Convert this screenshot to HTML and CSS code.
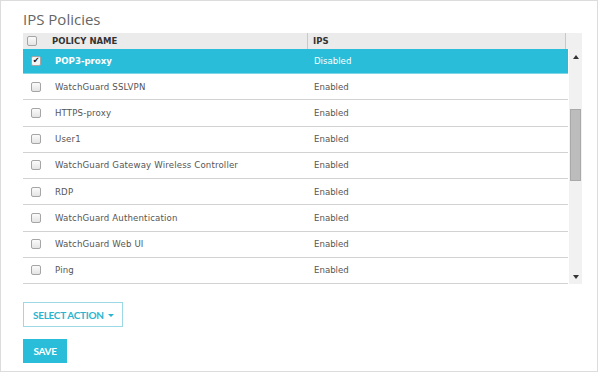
FILE: index.html
```html
<!DOCTYPE html>
<html lang="en">
<head>
  <meta charset="UTF-8">
  <title>IPS Policies</title>
  <link rel="stylesheet" href="styles.css">
</head>
<body>
  <div class="panel">
    <h1 class="title">IPS Policies</h1>

    <div class="grid">
      <div class="grid-head">
        <div class="col-check"><span class="box"></span></div>
        <div class="col-name">POLICY NAME</div>
        <div class="col-ips">IPS</div>
        <div class="corner"></div>
      </div>

      <div class="grid-body">
        <div class="rows">
          <div class="row selected">
            <div class="col-check"><span class="box checked">&#10004;</span></div>
            <div class="col-name">POP3-proxy</div>
            <div class="col-ips">Disabled</div>
          </div>
          <div class="row">
            <div class="col-check"><span class="box"></span></div>
            <div class="col-name">WatchGuard SSLVPN</div>
            <div class="col-ips">Enabled</div>
          </div>
          <div class="row">
            <div class="col-check"><span class="box"></span></div>
            <div class="col-name">HTTPS-proxy</div>
            <div class="col-ips">Enabled</div>
          </div>
          <div class="row">
            <div class="col-check"><span class="box"></span></div>
            <div class="col-name">User1</div>
            <div class="col-ips">Enabled</div>
          </div>
          <div class="row">
            <div class="col-check"><span class="box"></span></div>
            <div class="col-name">WatchGuard Gateway Wireless Controller</div>
            <div class="col-ips">Enabled</div>
          </div>
          <div class="row">
            <div class="col-check"><span class="box"></span></div>
            <div class="col-name">RDP</div>
            <div class="col-ips">Enabled</div>
          </div>
          <div class="row">
            <div class="col-check"><span class="box"></span></div>
            <div class="col-name">WatchGuard Authentication</div>
            <div class="col-ips">Enabled</div>
          </div>
          <div class="row">
            <div class="col-check"><span class="box"></span></div>
            <div class="col-name">WatchGuard Web UI</div>
            <div class="col-ips">Enabled</div>
          </div>
          <div class="row">
            <div class="col-check"><span class="box"></span></div>
            <div class="col-name">Ping</div>
            <div class="col-ips">Enabled</div>
          </div>
        </div>

        <!-- scrollbar -->
        <div class="scrollbar">
          <span class="arrow up"></span>
          <div class="track">
            <div class="thumb"></div>
          </div>
          <span class="arrow down"></span>
        </div>
      </div>
    </div>

    <button class="btn-outline">SELECT ACTION <span class="caret"></span></button>
    <button class="btn-save">SAVE</button>
  </div>
</body>
</html>
```

FILE: styles.css
```css
body {
  margin: 0;
  font-family: "DejaVu Sans", Verdana, sans-serif;
  background: #fff;
}
.panel {
  width: 598px;
  height: 372px;
  box-sizing: border-box;
  border: 1px solid #dcdcdc;
  padding: 0 0 0 22px;
}
.title {
  margin: 0;
  height: 32px;
  padding-top: 8px;
  box-sizing: border-box;
  font-family: "Open Sans", sans-serif;
  font-weight: 400;
  font-size: 15px;
  line-height: 20px;
  color: #666;
}
.grid {
  width: 559px;
}
.grid-head {
  display: flex;
  height: 16px;
  background: #ebebeb;
  font-size: 8.5px;
  font-weight: bold;
  color: #333;
  line-height: 16px;
}
.grid-head .col-check {
  width: 24px;
  padding-left: 4px;
  padding-top: 3px;
}
.grid-head .col-name {
  width: 260px;
  padding-left: 5px;
}
.grid-head .col-ips {
  width: 259px;
  padding-left: 5px;
  border-left: 1px solid #c8c8c8;
  border-right: 1px solid #c8c8c8;
}
.grid-head .corner {
  flex: 1;
  background: #f0f0f0;
}
.col-check, .col-name, .col-ips {
  box-sizing: border-box;
}
.grid-body {
  display: flex;
}
.rows {
  width: 545px;
}
.row {
  display: flex;
  height: 26.25px;
  box-sizing: border-box;
  border-bottom: 1px solid #d2d2d2;
  align-items: center;
  font-size: 8.6px;
  letter-spacing: 0.15px;
  color: #555;
}
.row .col-check {
  width: 24px;
  padding-left: 8px;
}
.row .col-name {
  width: 260px;
  padding-left: 8px;
}
.row .col-ips {
  width: 261px;
  padding-left: 7px;
  letter-spacing: 0;
}
.row.selected {
  height: 25px;
  background: #29bdd9;
  border-bottom: 1px solid #7fd5e6;
  color: #fff;
}
.row.selected .col-name {
  font-weight: bold;
  letter-spacing: 0;
}
.box {
  display: block;
  width: 10px;
  height: 10px;
  box-sizing: border-box;
  border: 1px solid #a5a5a5;
  border-radius: 2px;
  background: linear-gradient(#fbfbfb, #e4e4e4);
  font-size: 8px;
  line-height: 8px;
  letter-spacing: 0;
  text-align: center;
  color: #111;
}
.box.checked {
  background: #f4f4f4;
}
.scrollbar {
  width: 14px;
  margin-left: 1px;
  background: #f1f1f1;
  display: flex;
  flex-direction: column;
  align-items: center;
}
.arrow {
  width: 0;
  height: 0;
  border-left: 3px solid transparent;
  border-right: 3px solid transparent;
}
.arrow.up {
  margin-top: 6px;
  border-bottom: 4px solid #333;
}
.arrow.down {
  margin-bottom: 5px;
  border-top: 4px solid #333;
}
.track {
  flex: 1;
  width: 100%;
}
.thumb {
  margin: 50px auto 0;
  width: 11px;
  height: 72px;
  box-sizing: border-box;
  background: #bcbcbc;
  border: 1px solid #a9a9a9;
}
button {
  display: block;
  font-family: "Lato", sans-serif;
  font-weight: bold;
  cursor: pointer;
}
.btn-outline {
  margin-top: 18px;
  width: 100px;
  height: 25px;
  padding: 0 0 0 9px;
  text-align: left;
  background: #fff;
  border: 1px solid #9cd8e6;
  color: #2bb4d0;
  font-size: 10px;
  letter-spacing: -0.3px;
}
.caret {
  display: inline-block;
  margin-left: 2px;
  vertical-align: middle;
  border-left: 3px solid transparent;
  border-right: 3px solid transparent;
  border-top: 3px solid #2bb4d0;
}
.btn-save {
  margin-top: 12px;
  width: 44px;
  height: 24px;
  padding: 0;
  border: none;
  background: #29bdd9;
  color: #fff;
  font-size: 10px;
  letter-spacing: -0.3px;
}
```
